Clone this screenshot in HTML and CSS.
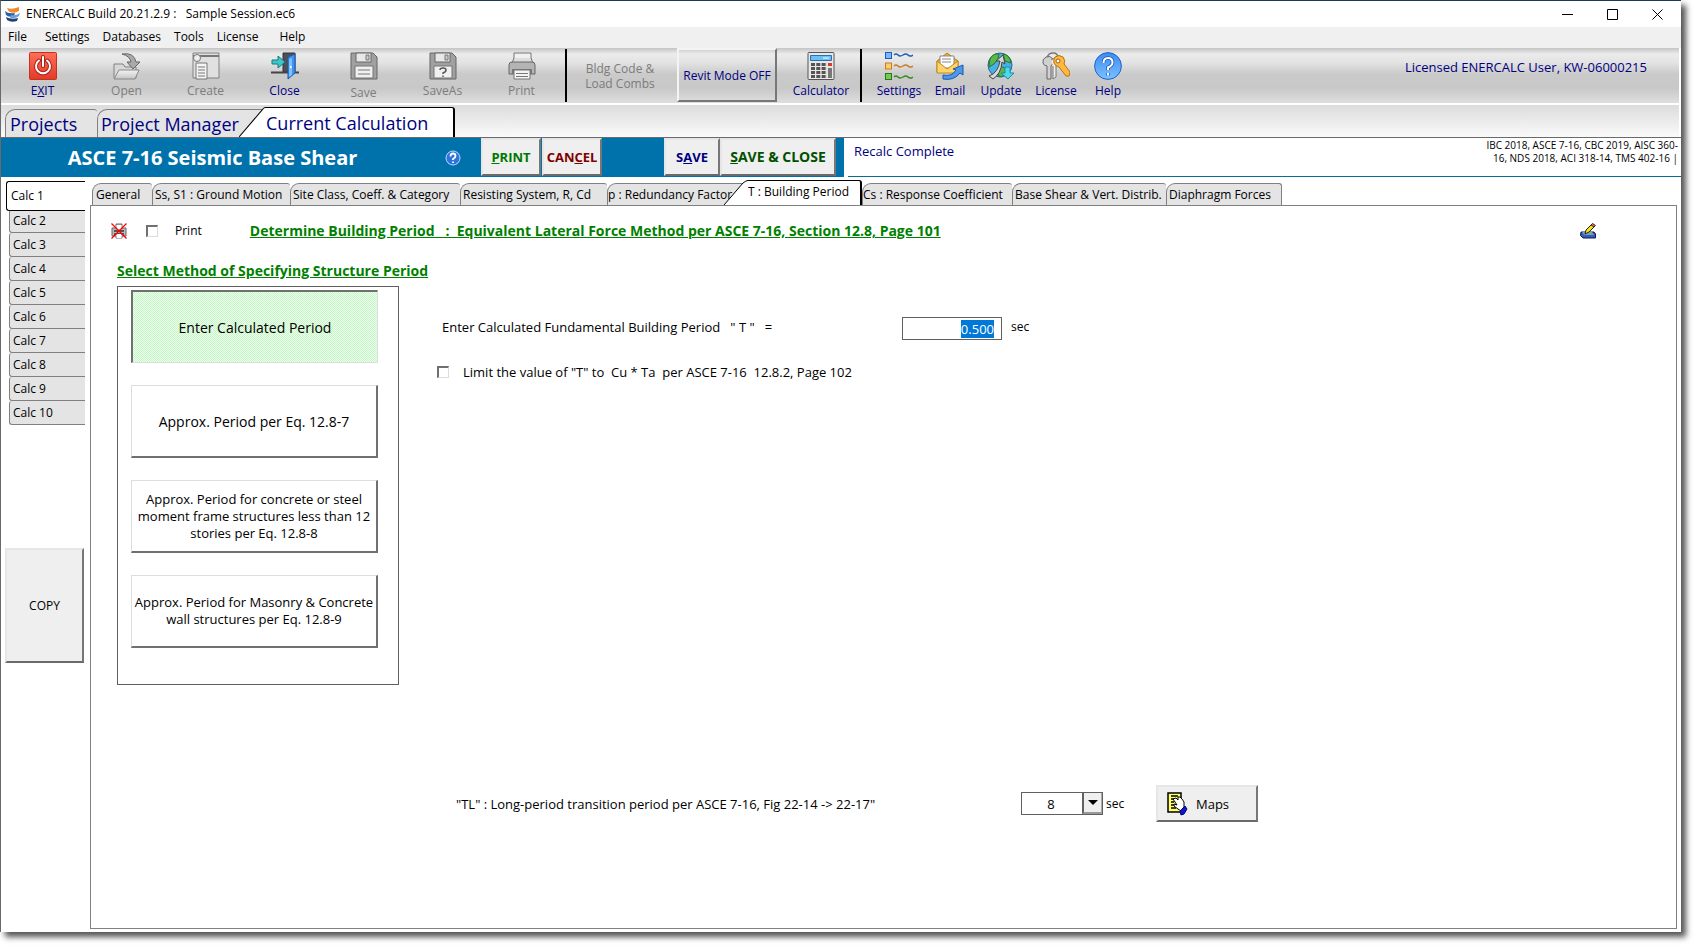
FILE: index.html
```html
<!DOCTYPE html>
<html lang="en">
<head>
<meta charset="utf-8">
<title>ENERCALC</title>
<link rel="stylesheet" href="styles.css">
</head>
<body>
<svg class="defs" aria-hidden="true">
  <defs>
    <linearGradient id="red" x1="0" y1="0" x2="0" y2="1"><stop offset="0" stop-color="#ff7058"/><stop offset="1" stop-color="#e03a28"/></linearGradient>
    <linearGradient id="blue" x1="0" y1="0" x2="0" y2="1"><stop offset="0" stop-color="#3c8cf0"/><stop offset="1" stop-color="#7cc0ff"/></linearGradient>
    <linearGradient id="grey" x1="0" y1="0" x2="0" y2="1"><stop offset="0" stop-color="#f4f4f4"/><stop offset="1" stop-color="#c4c4c4"/></linearGradient>
    <symbol id="floppy" viewBox="0 0 28 28">
      <path d="M1 1h22l4 4v22H1z" fill="#a0a0a0" stroke="#666"/>
      <path d="M6 1h15v9H6z" fill="#e8e8e8" stroke="#666"/>
      <path d="M16 3h3v5h-3z" fill="#ccc" stroke="#777"/>
      <path d="M5 14h18v12H5z" fill="#f0f0f0" stroke="#777"/>
    </symbol>
  </defs>
</svg>
<div class="window">
  <header class="titlebar">
    <svg class="logo" viewBox="0 0 16 16"><path d="M2 2q5 2 12-1v4q-5 3-9 1-2-1-3-4z" fill="#f08a28"/><path d="M0 5q3 3 10 2l-1 3q-5 2-8-1z" fill="#2d5fa8"/><path d="M6 9q5 1 9-2l-1 3q-4 3-9 2z" fill="#6aa0d8"/><path d="M1 11q5 3 12 1l-1 3q-6 2-10-1z" fill="#24407c"/></svg>
    <span class="caption">ENERCALC Build 20.21.2.9 :   Sample Session.ec6</span>
    <div class="controls">
      <button type="button" aria-label="Minimize"><svg viewBox="0 0 11 11"><path d="M0 5.5h11"/></svg></button>
      <button type="button" aria-label="Maximize"><svg viewBox="0 0 11 11"><path d="M.5.5h10v10H.5z"/></svg></button>
      <button type="button" aria-label="Close window"><svg viewBox="0 0 11 11"><path d="M.5.5l10 10M10.5.5l-10 10"/></svg></button>
    </div>
  </header>
  <nav class="menubar">
    <button type="button">File</button><button type="button">Settings</button><button type="button">Databases</button><button type="button">Tools</button><button type="button" class="wide">License</button><button type="button">Help</button>
  </nav>
  <div class="toolbar">
    <button type="button" class="tool exit">
      <svg viewBox="0 0 28 28"><rect x=".5" y=".5" width="27" height="27" rx="1" fill="url(#red)" stroke="#c83020"/><path d="M10 8.500a7 7 0 1 0 8 0M14 5v9" fill="none" stroke="#a82418" stroke-width="4" stroke-linecap="round"/><path d="M10 8.500a7 7 0 1 0 8 0M14 5v9" fill="none" stroke="#fff" stroke-width="2" stroke-linecap="round"/></svg>
      <span>E<u>X</u>IT</span></button>
    <button type="button" class="tool" disabled>
      <svg viewBox="0 0 28 28"><path d="M1 26V12h9l2 3h11v11z" fill="#d8d8d8" stroke="#808080"/><path d="M1 27l5-9h20l-4 9z" fill="url(#grey)" stroke="#888"/><path d="M9 2q12-2 14 8h4l-7 7-6-7h4q-1-6-9-8z" fill="#aaa" stroke="#666"/></svg>
      <span>Open</span></button>
    <button type="button" class="tool" disabled>
      <svg viewBox="0 0 28 28"><path d="M1 1h26v25H1z" fill="#e0e0e0" stroke="#808080"/><path d="M1 4h26" stroke="#777" stroke-width="2"/><circle cx="5" cy="6" r="3.500" fill="#eee" stroke="#777"/><path d="M4 11h11v16H4z" fill="#f4f4f4" stroke="#777"/><path d="M6 15h7M6 18h7M6 21h7M6 24h7" stroke="#777"/></svg>
      <span>Create</span></button>
    <button type="button" class="tool">
      <svg viewBox="0 0 28 28"><path d="M12 1h12v19H12z" fill="#4c5058" stroke="#333"/><path d="M0 20.500h28" stroke="#444" stroke-width="2"/><path d="M17 5l7-3v19l-7 6z" fill="#3c94f0" stroke="#1c58b0"/><path d="M18 7l3-1v17l-3 2z" fill="#80c0ff"/><path d="M19 15h1.500" stroke="#fff" stroke-width="2"/><path d="M1 8h6V4l7 6-7 6v-4H1z" fill="#38c8cc" stroke="#187880"/></svg>
      <span>Close</span></button>
    <button type="button" class="tool low" disabled>
      <svg viewBox="0 0 28 28"><use href="#floppy"/><path d="M8 18h12M8 22h12" stroke="#777"/></svg>
      <span>Save</span></button>
    <button type="button" class="tool" disabled>
      <svg viewBox="0 0 28 28"><use href="#floppy"/><path d="M11 18q0-2 3-2t3 2-3 3v1M14 23.500v1.500" fill="none" stroke="#555" stroke-width="1.500"/></svg>
      <span>SaveAs</span></button>
    <button type="button" class="tool" disabled>
      <svg viewBox="0 0 28 28"><path d="M6 10V1h17v9z" fill="#f0f0f0" stroke="#777"/><path d="M6 6l-2 5h21l-2-5" fill="#ddd" stroke="#777"/><path d="M1 13q0-3 3-3h20q3 0 3 3v9H1z" fill="#b4b4b4" stroke="#666"/><path d="M4 17h20v5H4z" fill="#777"/><path d="M6 18h16v9H6z" fill="#f4f4f4" stroke="#777"/><path d="M8 21.500h12M8 24.500h12" stroke="#777"/></svg>
      <span>Print</span></button>
    <span class="sep"></span>
    <button type="button" class="codes-btn" disabled>Bldg Code &amp;<br>Load Combs</button>
    <button type="button" class="raised revit">Revit Mode OFF</button>
    <button type="button" class="tool calc">
      <svg viewBox="0 0 28 28"><rect x="1" y=".5" width="26" height="27" rx="1" fill="#e8e8e8" stroke="#555"/><path d="M3.500 3.500h21v5h-21z" fill="#6cc0f4" stroke="#2870b8"/><path d="M16 6h6" stroke="#fff"/><path d="M4 12.500h16M4 16.500h16M4 20.500h16M4 24.500h16" stroke="#555" stroke-width="3" stroke-dasharray="4 1.300"/><path d="M21 11h4v3h-4z" fill="#e03828"/><path d="M21 16h4v10h-4z" fill="#777"/></svg>
      <span>Calculator</span></button>
    <span class="sep"></span>
    <button type="button" class="tool w-settings">
      <svg viewBox="0 0 28 28"><g fill="none" stroke-width="1.500"><path d="M9 3q2-2 4 0t5 0 5 0 5 0" stroke="#1c5cb8"/><path d="M9 14q2-2 4 0t5 0 5 0 5 0" stroke="#c87c20"/><path d="M9 25q2-2 4 0t5 0 5 0 5 0" stroke="#388820"/></g><rect x=".5" y=".5" width="6" height="6" fill="#78b8ff" stroke="#1c5cc0"/><rect x=".5" y="11" width="6" height="6" fill="#ffcc68" stroke="#c87c20"/><rect x=".5" y="21.500" width="6" height="6" fill="#78c858" stroke="#287818"/></svg>
      <span>Settings</span></button>
    <button type="button" class="tool w-email">
      <svg viewBox="0 0 28 28"><path d="M1 9l10-8 11 8v11H1z" fill="#f0b030" stroke="#b87818"/><path d="M4 4h14v12H4z" fill="#fff" stroke="#888"/><path d="M6 7h9M6 10h9" stroke="#888"/><path d="M1 9l10 8 11-8v12H1z" fill="#ffd468" stroke="#c08820"/><path d="M7 23q9 2 13-5l-3-1 10-4v10l-3-2q-6 8-17 6z" fill="#4c98ec" stroke="#1c58b0"/></svg>
      <span>Email</span></button>
    <button type="button" class="tool w-update">
      <svg viewBox="0 0 28 28"><circle cx="13" cy="13" r="12" fill="#48b0e8" stroke="#286890"/><path d="M3 7q3-6 9-5l-1 5-4 5-5 3zM16 2q7 1 8 9l-6-2zM13 14l7 3-5 8-4-2z" fill="#58b848" stroke="#287830"/><path d="M2 24q9-3 11-15H9l7-6 2 9-3-2q-1 12-9 17z" fill="#d8d8d8" stroke="#444"/><path d="M18 15h5v6h4l-6 6-7-6h4z" fill="#50d8e8" stroke="#1890a8"/></svg>
      <span>Update</span></button>
    <button type="button" class="tool w-license">
      <svg viewBox="0 0 28 28"><path d="M5 6q1-5 6-5t5 5" fill="none" stroke="#777" stroke-width="1.500"/><path d="M4 5q-4 2-3 6 1 3 4 3v13h4V14q4-3 2-7-3-4-7-2z" fill="#d0d0d0" stroke="#666"/><path d="M9 8q3-3 5 0t0 6v11l-3 2V14" fill="#eee" stroke="#777"/><path d="M13 5q4-3 8 0 3 4 1 7l6 8-1 4h-3l-7-9q-4-1-5-4t1-6z" fill="#ffb840" stroke="#b87010"/><circle cx="16" cy="9" r="2" fill="#fff" stroke="#a06010"/></svg>
      <span>License</span></button>
    <button type="button" class="tool w-help">
      <svg viewBox="0 0 28 28"><circle cx="14" cy="14" r="13.400" fill="url(#blue)" stroke="#1c64d0"/><path d="M9.500 11q0-5 4.500-5t4.500 4.500q0 3-4.500 5V18M14 21v2.500" fill="none" stroke="#1c58b8" stroke-width="3.500"/><path d="M9.500 11q0-5 4.500-5t4.500 4.500q0 3-4.500 5V18M14 21v2.500" fill="none" stroke="#fff" stroke-width="2"/></svg>
      <span>Help</span></button>
    <p class="licensed">Licensed ENERCALC User, KW-06000215</p>
  </div>
  <div class="maintabs" role="tablist">
    <button type="button" role="tab" class="mt mt-projects">Projects</button>
    <button type="button" role="tab" class="mt mt-manager">Project Manager</button>
    <svg class="slant big" viewBox="0 0 26 29" preserveAspectRatio="none"><path d="M0 29L23 3Q25 .5 26 .5V29z" fill="#fff"/><path d="M0 29L23 3Q25 .5 26 .5" fill="none" stroke="#000"/></svg>
    <button type="button" role="tab" aria-selected="true" class="mt mt-current">Current Calculation</button>
  </div>
  <div class="calcbar">
    <div class="calcbar-blue">
      <h1>ASCE 7-16 Seismic Base Shear</h1>
      <button type="button" class="mini-help" aria-label="Help on this module"><svg viewBox="0 0 16 16"><circle cx="8" cy="8" r="7" fill="#2c74dc" stroke="#b8dcff"/><path d="M5.500 6.500q0-3 2.500-3t2.500 2.500q0 1.500-2.500 3V10M8 11.500V13" fill="none" stroke="#fff" stroke-width="1.800"/></svg></button>
      <button type="button" class="raised b-print"><span><u>P</u>RINT</span></button>
      <button type="button" class="raised b-cancel"><span>CAN<u>C</u>EL</span></button>
      <button type="button" class="raised b-save"><span>S<u>A</u>VE</span></button>
      <button type="button" class="raised b-saveclose"><span><u>S</u>AVE &amp; CLOSE</span></button>
    </div>
    <div class="calcbar-info">
      <p class="status">Recalc Complete</p>
      <p class="codes">IBC 2018, ASCE 7-16, CBC 2019, AISC 360-<br>16, NDS 2018, ACI 318-14, TMS 402-16 |</p>
    </div>
  </div>
  <div class="work">
    <aside class="side">
      <div class="calcs" role="tablist" aria-label="Calculations">
        <button type="button" role="tab" aria-selected="true">Calc 1</button>
        <button type="button" role="tab">Calc 2</button>
        <button type="button" role="tab">Calc 3</button>
        <button type="button" role="tab">Calc 4</button>
        <button type="button" role="tab">Calc 5</button>
        <button type="button" role="tab">Calc 6</button>
        <button type="button" role="tab">Calc 7</button>
        <button type="button" role="tab">Calc 8</button>
        <button type="button" role="tab">Calc 9</button>
        <button type="button" role="tab">Calc 10</button>
      </div>
      <button type="button" class="raised copy">COPY</button>
    </aside>
    <main class="sheet">
      <div class="subtabs" role="tablist">
        <button type="button" role="tab" class="st t1">General</button>
        <button type="button" role="tab" class="st t2">Ss, S1 : Ground Motion</button>
        <button type="button" role="tab" class="st t3">Site Class, Coeff. &amp; Category</button>
        <button type="button" role="tab" class="st t4">Resisting System,  R,  Cd</button>
        <button type="button" role="tab" class="st t5">p : Redundancy Factor</button>
        <svg class="slant small" viewBox="0 0 24 25" preserveAspectRatio="none"><path d="M0 25L19 3Q22 .5 24 .5V25z" fill="#fff"/><path d="M0 25L19 3Q22 .5 24 .5" fill="none" stroke="#000"/></svg>
        <button type="button" role="tab" aria-selected="true" class="st t6">T : Building Period</button>
        <button type="button" role="tab" class="st t7">Cs : Response Coefficient</button>
        <button type="button" role="tab" class="st t8">Base Shear &amp; Vert. Distrib.</button>
        <button type="button" role="tab" class="st t9">Diaphragm Forces</button>
      </div>
      <section class="panel">
        <div class="headline">
          <svg class="noprint" viewBox="0 0 16 16"><path d="M5 1h6v4h4v8h-4v2H5v-2H1V5h4z" fill="#bbb" stroke="#666"/><path d="M3 8h10M3 11h10" stroke="#555" stroke-width="2"/><path d="M5.500 2h5v4h-5zM5.500 11h5v4h-5z" fill="#fff"/><path d="M.5.500l15 15M15.500.500l-15 15" stroke="#f00" stroke-width="1.300"/></svg>
          <label class="check"><input type="checkbox"><span>Print</span></label>
          <h2>Determine Building Period   :  Equivalent Lateral Force Method per ASCE 7-16, Section 12.8, Page 101</h2>
          <button type="button" class="edit" aria-label="Notes"><svg viewBox="0 0 16 16"><path d="M1 9h5l8 0 1.500 2v4H3L.5 12.500z" fill="#3458c8" stroke="#101848"/><path d="M2 9h10l2 3H4z" fill="#70a8a8"/><path d="M5 11l1-4 6-6 3 2-6 6z" fill="#f8e010" stroke="#222"/><path d="M11 2l1.500-1.500 3 2L14 4z" fill="#d87858" stroke="#422"/></svg></button>
        </div>
        <h3>Select Method of Specifying Structure Period</h3>
        <div class="form">
          <div class="methods">
            <button type="button" aria-pressed="true" class="method large">Enter Calculated Period</button>
            <button type="button" class="method large">Approx. Period per Eq. 12.8-7</button>
            <button type="button" class="method">Approx. Period for concrete or steel<br>moment frame structures less than 12<br>stories per Eq. 12.8-8</button>
            <button type="button" class="method">Approx. Period for Masonry &amp; Concrete<br>wall structures per Eq. 12.8-9</button>
          </div>
          <div class="fields">
            <div class="field">
              <label for="period">Enter Calculated Fundamental Building Period   " T "   =</label>
              <input id="period" type="text" value="0.500">
              <span class="unit">sec</span>
            </div>
            <label class="check limit"><input type="checkbox"><span>Limit the value of "T" to  Cu * Ta  per ASCE 7-16  12.8.2, Page 102</span></label>
          </div>
        </div>
        <div class="transition">
          <label for="tl">"TL" : Long-period transition period per ASCE 7-16, Fig 22-14 -&gt; 22-17"</label>
          <div class="combo">
            <select id="tl"><option>8</option></select>
            <span class="arrow" aria-hidden="true"></span>
          </div>
          <span class="unit">sec</span>
          <button type="button" class="raised maps">
            <svg viewBox="0 0 22 24"><path d="M2 1h13v19H2z" fill="#ffff70" stroke="#000" stroke-width="1.500"/><path d="M5 4h7M5 7h4M5 10h3M5 13h4M5 16h5" stroke="#000" stroke-width="1.500"/><path d="M7 7l3-1 2 2 0-3h2l2 2 2 3v6l-3 3-3-2-4-3v-2l3 1z" fill="#fff" stroke="#000"/><path d="M14 19l5-5 2 3-3 5-3 1z" fill="#1018c8" stroke="#000080"/></svg>
            <span>Maps</span>
          </button>
        </div>
      </section>
    </main>
  </div>
</div>
<script src="main.js"></script>
</body>
</html>
```
FILE: styles.css
```css
* { box-sizing: border-box; }
body {
  margin: 0;
  min-height: 100vh;
  padding: 0 16px 16px 0;
  display: flex;
  background: #fff;
  color: #000;
  font: 12px/16px "Open Sans", "Noto Sans", sans-serif;
}
h1, h2, h3, p { margin: 0; }
button, input, select { font: inherit; color: inherit; }
button { margin: 0; padding: 0; border: 0; background: none; white-space: nowrap; }
svg { display: block; flex: none; }
.defs { position: absolute; width: 0; height: 0; }

.window {
  flex: 1;
  min-width: 0;
  display: flex;
  flex-direction: column;
  border: solid #6a6a6a;
  border-width: 1px 0 0 1px;
  border-top-color: #1f3a55;
  background: #fff;
  box-shadow: 5px 5px 6px 0 #555;
}

.titlebar { display: flex; align-items: center; height: 26px; padding-left: 4px; gap: 5px; }
.logo { width: 16px; height: 16px; }
.caption { flex: 1; white-space: pre; }
.controls { display: flex; padding-right: 1px; }
.controls button { width: 45px; height: 26px; display: grid; place-items: center; }
.controls svg { width: 11px; height: 11px; fill: none; stroke: #000; }

.menubar { display: flex; height: 21px; padding: 0 0 2px 7px; gap: 18px; background: #f0f0f0; }
.menubar button:nth-child(n+3) { margin-left: -5px; }
.menubar .wide { margin-right: 8px; }

.toolbar {
  display: flex;
  height: 55px;
  padding-left: 2px;
  margin-right: 2px;
  color: navy;
  background: linear-gradient(#c4c4c4, #ebebeb 6px, #e4e4e4 14px, #cacaca 26px, #c8c8c8 40px, #dedede);
}
.tool {
  flex: none;
  width: 79px;
  padding-top: 4px;
  display: flex;
  flex-direction: column;
  align-items: center;
  gap: 3px;
}
.tool svg { width: 28px; height: 28px; }
.tool:disabled, .codes-btn:disabled { color: #7c7c7c; }
.tool.exit { margin-right: 5px; }
.tool.low { gap: 5px; }
.sep { flex: none; width: 2px; height: 53px; background: #000; margin: 1px 0 0 4px; }
.codes-btn { width: 110px; padding-right: 4px; line-height: 15px; text-align: center; }
.raised {
  background: #efefef;
  border: 2px solid;
  border-color: #e6e6e6 #777 #6a6a6a #e6e6e6;
}
.toolbar .revit { width: 100px; height: 54px; padding-top: 2px; background: transparent; border-color: #f4f4f4 #777 #777 #f4f4f4; }
.tool.calc { width: 76px; margin: 0 -3px 0 6px; }
.tool.w-settings { width: 54px; margin-left: 10px; }
.tool.w-email { width: 48px; }
.tool.w-update { width: 54px; }
.tool.w-license { width: 56px; }
.tool.w-help { width: 48px; }
.licensed { margin: 11px 32px 0 auto; font-size: 13px; white-space: nowrap; }

.maintabs {
  display: flex;
  align-items: flex-end;
  height: 34px;
  padding-left: 4px;
  margin-right: 2px;
  border-top: 2px solid #fff;
  background: linear-gradient(#dcdcdc, #fafafa);
}
.mt {
  height: 28px;
  padding: 0 0 0 4px;
  text-align: left;
  font-size: 18px;
  line-height: 20px;
  color: navy;
  border: 1px solid #808080;
  border-bottom: 0;
  border-radius: 10px 3px 0 0;
  background: #e4e4e4;
}
.mt-projects { width: 92px; border-right: 0; }
.mt-manager { width: 168px; padding-left: 3px; }
.slant { position: relative; }
.slant.big { width: 26px; height: 30px; margin-left: -26px; }
.mt-current {
  width: 190px;
  height: 30px;
  padding-left: 1px;
  border: solid #000;
  border-width: 1px 2px 0 0;
  border-radius: 0 3px 0 0;
  background: #fff;
}

.calcbar { display: flex; height: 40px; border-top: 1px solid #6a6a6a; }
.calcbar-blue { flex: none; display: flex; align-items: center; padding-right: 8px; background: #0072ab; }
.calcbar-blue h1 { width: 423px; text-align: center; font-size: 20px; line-height: 26px; color: #fff; }
.mini-help { width: 57px; height: 18px; padding-left: 21px; }
.mini-help svg { width: 16px; height: 16px; }
.calcbar-blue .raised { height: 38px; align-self: flex-start; font-size: 13px; font-weight: 700; }
.b-print { width: 60px; color: #007800; }
.b-cancel { width: 60px; margin: 0 62px 0 1px; color: #800000; }
.b-save { width: 56px; color: navy; }
.calcbar-blue .b-saveclose { width: 116px; font-size: 14px; color: #005000; }
.calcbar-info {
  flex: 1;
  display: flex;
  justify-content: space-between;
  margin-left: 4px;
  padding: 0 3px 0 6px;
  border-bottom: 1px solid #0a6a9c;
}
.status { padding-top: 5px; font-size: 13px; color: navy; }
.codes { padding-top: 1px; text-align: right; font-size: 10px; line-height: 13px; white-space: nowrap; }

.work { flex: 1; display: flex; padding: 3px 4px 3px 4px; }
.side { flex: none; width: 85px; padding-top: 1px; }
.calcs { display: flex; flex-direction: column; align-items: flex-end; padding-right: 5px; }
.calcs button {
  width: 76px;
  height: 24px;
  padding-left: 3px;
  text-align: left;
  border: 1px solid #808080;
  border-width: 0 0 1px 1px;
  border-radius: 3px 0 0 3px;
  background: #e4e4e4;
}
.calcs button[aria-selected] {
  width: 79px;
  height: 30px;
  margin-bottom: -2px;
  padding-left: 4px;
  position: relative;
  border: 1px solid #000;
  border-right: 0;
  background: #fff;
}
.copy { width: 79px; height: 115px; margin-top: 123px; }

.sheet { flex: 1; min-width: 0; display: flex; flex-direction: column; }
.subtabs { display: flex; align-items: flex-end; padding-left: 2px; height: 25px; }
.st {
  flex: none;
  height: 22px;
  padding: 0 0 0 2px;
  text-align: left;
  border: 1px solid #808080;
  border-width: 1px 0 0 1px;
  border-radius: 9px 3px 0 0;
  background: #e4e4e4;
}
.t1 { width: 60px; padding-left: 3px; }
.t2 { width: 138px; }
.t3 { width: 170px; }
.t4 { width: 147px; }
.t5 { width: 141px; padding-left: 0; }
.slant.small { width: 24px; height: 25px; margin-left: -24px; }
.t6 {
  height: 25px;
  width: 114px;
  padding: 0 0 2px 0;
  border: solid #000;
  border-width: 1px 2px 0 0;
  border-radius: 0 3px 0 0;
  background: #fff;
}
.t7 { width: 150px; padding-left: 0; }
.t8 { width: 154px; }
.t9 { width: 116px; border-right-width: 1px; }

.panel {
  flex: 1;
  display: flex;
  flex-direction: column;
  border: 1px solid #808080;
  padding: 14px 80px 0 26px;
}
.panel h2, .panel label { white-space: pre; }
.headline { display: flex; align-items: center; margin-left: -6px; height: 22px; }
.noprint { width: 16px; height: 16px; margin-right: 19px; }
.check { display: flex; align-items: center; gap: 17px; }
.check input {
  appearance: none;
  margin: 0;
  width: 12px;
  height: 12px;
  border: solid;
  border-width: 2px 1px 1px 2px;
  border-color: #707070 #ddd #ddd #707070;
  background: #fff;
}
h2, h3 { font-size: 14px; line-height: 20px; color: #008000; text-decoration: underline; }
h2 { margin: 0 auto 0 48px; }
.edit svg { width: 16px; height: 16px; }
h3 { margin-top: 19px; }
.form { display: flex; margin-top: 5px; font-size: 13px; }
.methods {
  flex: none;
  width: 282px;
  height: 399px;
  padding: 3px 0 0 13px;
  display: flex;
  flex-direction: column;
  gap: 22px;
  border: 1px solid #606060;
}
.method {
  width: 247px;
  height: 73px;
  line-height: 17px;
  background: #fff;
  border: solid;
  border-width: 1px 2px 2px 1px;
  border-color: #ddd #707070 #707070 #ddd;
}
.method.large { font-size: 14px; }
.method[aria-pressed] {
  border-width: 2px 1px 1px 2px;
  border-color: #707070 #ddd #ddd #707070;
  background: repeating-conic-gradient(#c4f8c4 0 25%, #effdef 0 50%) 0 0 / 2px 2px;
}
.fields { flex: 1; padding: 31px 0 0 38px; }
.field { display: flex; height: 24px; margin-left: 5px; }
.field label { width: 460px; padding-top: 2px; }
.field input {
  width: 100px;
  height: 23px;
  padding: 0 7px;
  text-align: right;
  border: 1px solid #606060;
  border-radius: 0;
  outline: 0;
}
.field input::selection { color: #fff; background: #0078d7; }
.unit { font-size: 12px; }
.field .unit { padding: 2px 0 0 9px; }
.limit { margin-top: 23px; gap: 14px; }
.transition { display: flex; align-items: center; margin: 100px 0 0 339px; font-size: 13px; }
.transition label { width: 565px; }
.combo { position: relative; width: 82px; height: 23px; }
.combo select {
  appearance: none;
  display: block;
  width: 82px;
  height: 23px;
  padding: 0 22px 0 0;
  text-align: center;
  text-align-last: center;
  border: 1px solid #606060;
  border-radius: 0;
  background: #fff;
}
.arrow {
  position: absolute;
  top: 1px;
  right: 1px;
  width: 20px;
  height: 21px;
  display: grid;
  place-items: center;
  border: solid;
  border-width: 0 1px 2px 2px;
  border-color: #777 #aaa #999 #606060;
  background: #efefef;
  pointer-events: none;
}
.arrow::before {
  content: "";
  border: 5px solid transparent;
  border-top-color: #000;
  border-bottom: 0;
}
.transition .unit { width: 53px; padding-left: 3px; }
.maps { width: 102px; height: 37px; display: flex; align-items: center; gap: 8px; padding-left: 8px; }
.maps svg { width: 22px; height: 24px; }
```
FILE: main.js
```js
const period = document.getElementById("period");
period.focus();
period.select();
```
